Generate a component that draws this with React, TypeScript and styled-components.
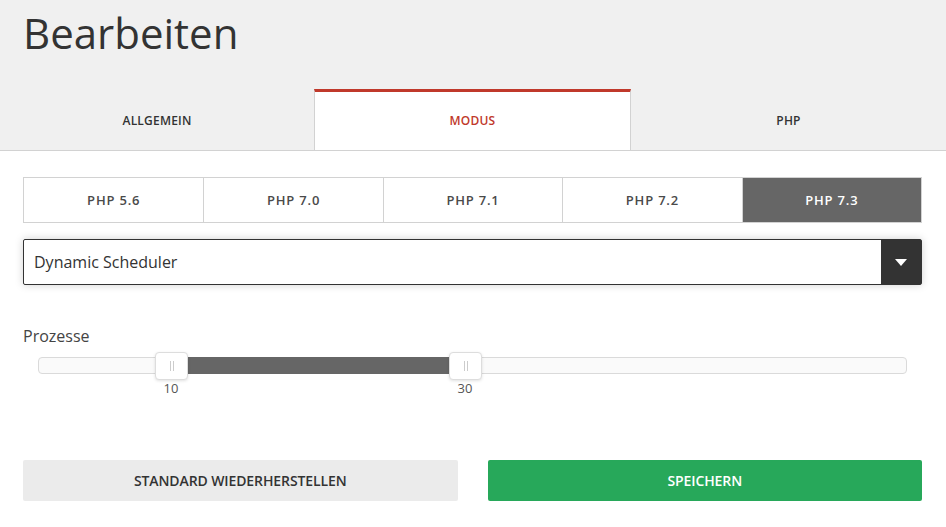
import React from "react";
import styled, { createGlobalStyle } from "styled-components";

const Global = createGlobalStyle`
  html, body { margin: 0; padding: 0; background: #fff; }
  body { font-family: "Open Sans", "Noto Sans", sans-serif; color: #333; }
  * { box-sizing: border-box; }
`;

const Page = styled.div`
  width: 946px;
  height: 527px;
  background: #fff;
  overflow: hidden;
`;

const Header = styled.header`
  height: 90px;
  background: #f0f0f0;
  padding: 5px 23px 0;
  border-bottom: 1px solid #d2d2d2;
`;

const Title = styled.h1`
  margin: 0;
  font-size: 42px;
  font-weight: 400;
  line-height: 56px;
  color: #333;
`;

const Tabs = styled.nav`
  display: grid;
  grid-template-columns: 314px 317px 1fr;
  height: 61px;
  border-bottom: 1px solid #d2d2d2;
  background: #f0f0f0;
`;

const Tab = styled.div<{ $active?: boolean }>`
  display: flex;
  align-items: center;
  justify-content: center;
  font-size: 12px;
  font-weight: 600;
  letter-spacing: 0.2px;
  text-transform: uppercase;
  color: ${(p) => (p.$active ? "#c0392b" : "#333")};
  background: ${(p) => (p.$active ? "#fff" : "#f0f0f0")};
  border-top: 3px solid ${(p) => (p.$active ? "#c0392b" : "transparent")};
  border-left: ${(p) => (p.$active ? "1px solid #d2d2d2" : "0")};
  border-right: ${(p) => (p.$active ? "1px solid #d2d2d2" : "0")};
  margin-top: -1px;
  padding-bottom: 1px;
`;

const Content = styled.main`
  padding: 26px 24px 0 23px;
`;

const Versions = styled.div`
  display: grid;
  grid-template-columns: repeat(5, 1fr);
  height: 46px;
  border: 1px solid #d2d2d2;
`;

const Version = styled.div<{ $active?: boolean }>`
  display: flex;
  align-items: center;
  justify-content: center;
  font-size: 13px;
  font-weight: 600;
  letter-spacing: 0.8px;
  color: ${(p) => (p.$active ? "#fff" : "#4a4a4a")};
  background: ${(p) => (p.$active ? "#666" : "#fff")};
  border-left: 1px solid #d2d2d2;
  &:first-child { border-left: 0; }
`;

const Select = styled.div`
  margin-top: 16px;
  height: 46px;
  display: flex;
  border: 1px solid #333;
  border-radius: 2px;
  box-shadow: 0 0 8px rgba(0, 0, 0, 0.18);
  background: #fff;
`;

const SelectValue = styled.div`
  flex: 1;
  display: flex;
  align-items: center;
  padding-left: 10px;
  font-size: 16px;
  color: #333;
`;

const SelectArrow = styled.div`
  width: 40px;
  background: #333;
  display: flex;
  align-items: center;
  justify-content: center;
`;

const Label = styled.div`
  margin-top: 40px;
  font-size: 16px;
  color: #444;
  line-height: 22px;
`;

const SliderWrap = styled.div`
  position: relative;
  margin: 3px 15px 0 15px;
  height: 46px;
`;

const Track = styled.div`
  position: absolute;
  left: 0;
  right: 0;
  top: 7px;
  height: 17px;
  background: #fafafa;
  border: 1px solid #dadada;
  border-radius: 4px;
`;

const Fill = styled.div`
  position: absolute;
  top: 7px;
  height: 17px;
  background: #666;
`;

const Handle = styled.div`
  position: absolute;
  top: 2px;
  width: 33px;
  height: 28px;
  margin-left: -16px;
  background: #fff;
  border: 1px solid #ddd;
  border-radius: 4px;
  box-shadow: 0 1px 3px rgba(0, 0, 0, 0.12);
  display: flex;
  justify-content: center;
  align-items: center;
  gap: 2px;
  &::before, &::after {
    content: "";
    width: 1px;
    height: 10px;
    background: #ccc;
  }
`;

const Tick = styled.div`
  position: absolute;
  top: 29px;
  transform: translateX(-50%);
  font-size: 13px;
  color: #555;
  line-height: 18px;
`;

const Actions = styled.div`
  margin-top: 64px;
  display: grid;
  grid-template-columns: 1fr 1fr;
  gap: 30px;
`;

const Button = styled.button<{ $primary?: boolean }>`
  height: 41px;
  border: 0;
  border-radius: 2px;
  font-family: "Open Sans", sans-serif;
  font-size: 14px;
  font-weight: 600;
  letter-spacing: -0.1px;
  text-transform: uppercase;
  color: ${(p) => (p.$primary ? "#fff" : "#333")};
  background: ${(p) => (p.$primary ? "#27a85a" : "#ebebeb")};
  cursor: pointer;
`;

const versions = ["PHP 5.6", "PHP 7.0", "PHP 7.1", "PHP 7.2", "PHP 7.3"];

export default function App() {
  // slider spans x=38..907 (869px); handles at 171 and 465
  const trackW = 869;
  const lo = 171 - 38;
  const hi = 465 - 38;
  return (
    <Page>
      <Global />
      <Header>
        <Title>Bearbeiten</Title>
      </Header>
      <Tabs>
        <Tab>Allgemein</Tab>
        <Tab $active>Modus</Tab>
        <Tab>PHP</Tab>
      </Tabs>
      <Content>
        <Versions>
          {versions.map((v, i) => (
            <Version key={v} $active={i === 4}>
              {v}
            </Version>
          ))}
        </Versions>
        <Select>
          <SelectValue>Dynamic Scheduler</SelectValue>
          <SelectArrow>
            <svg width="12" height="7" viewBox="0 0 12 7">
              <path d="M0 0 L12 0 L6 7 Z" fill="#fff" />
            </svg>
          </SelectArrow>
        </Select>
        <Label>Prozesse</Label>
        <SliderWrap style={{ width: trackW }}>
          <Track />
          <Fill style={{ left: lo, width: hi - lo }} />
          <Handle style={{ left: lo }} />
          <Handle style={{ left: hi }} />
          <Tick style={{ left: lo }}>10</Tick>
          <Tick style={{ left: hi }}>30</Tick>
        </SliderWrap>
        <Actions>
          <Button>Standard wiederherstellen</Button>
          <Button $primary>Speichern</Button>
        </Actions>
      </Content>
    </Page>
  );
}
